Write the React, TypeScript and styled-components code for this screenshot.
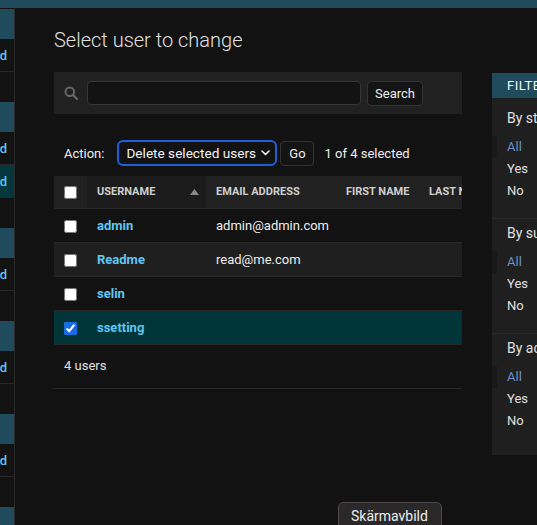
import React from "react";
import styled, { createGlobalStyle } from "styled-components";

const Global = createGlobalStyle`
  html, body { margin: 0; padding: 0; background: #121212; overflow: hidden; }
  body { font-family: Roboto, "Liberation Sans", Arial, sans-serif; color: #eeeeee; font-size: 13px; }
  * { box-sizing: border-box; }
`;

const TEAL = "#1f4b5d";
const LINK = "#62c6f2";
const HAIR = "#272727";

const Page = styled.div`
  position: relative;
  width: 537px;
  height: 525px;
  overflow: hidden;
  display: flex;
  flex-direction: column;
`;

const TopBar = styled.div`
  height: 8px;
  flex-shrink: 0;
  background: ${TEAL};
`;

const Body = styled.div`
  display: flex;
  flex: 1;
  min-height: 0;
`;

const Sidebar = styled.nav`
  width: 15px;
  flex-shrink: 0;
  border-right: 1px solid #2b2b2b;
  overflow: hidden;
  padding-top: 1px;
`;

const SidebarInner = styled.div`
  width: 240px;
  margin-left: -226px;
`;

const Module = styled.div`
  margin-bottom: 30px;
`;

const Caption = styled.div`
  height: 30px;
  background: ${TEAL};
  color: #f7f7f7;
  font-size: 11px;
  line-height: 30px;
  padding: 0 40px 0 10px;
  white-space: nowrap;
  overflow: hidden;
`;

const NavRow = styled.div<{ $current?: boolean }>`
  height: 33px;
  border-bottom: 1px solid ${HAIR};
  background: ${(p) => (p.$current ? "#04383c" : "transparent")};
  display: flex;
  align-items: center;
  justify-content: space-between;
  padding: 0 7px 0 10px;
`;

const NavLink = styled.span`
  color: ${LINK};
  font-size: 13px;
  font-weight: 500;
  white-space: nowrap;
`;

const Content = styled.main`
  flex: 1;
  min-width: 0;
  padding: 20px 0 0 39px;
`;

const Title = styled.h1`
  margin: 0 0 20px;
  font-size: 20px;
  line-height: 24px;
  font-weight: 300;
  color: #e0e0e0;
`;

const Changelist = styled.div`
  display: flex;
  align-items: flex-start;
  gap: 30px;
`;

const Main = styled.div`
  width: 408px;
  flex-shrink: 0;
`;

const Toolbar = styled.form`
  height: 42px;
  background: #212121;
  padding: 0 10px;
  display: flex;
  align-items: center;
`;

const SearchIcon = styled.svg`
  width: 14px;
  height: 14px;
  margin-right: 9px;
  flex-shrink: 0;
`;

const SearchInput = styled.input`
  width: 274px;
  height: 24px;
  border: 1px solid #363636;
  border-radius: 4px;
  background: #121212;
  color: #eee;
  margin: 0 6px 0 0;
  padding: 0 6px;
  outline: none;
`;

const Button = styled.button<{ $w: number }>`
  width: ${(p) => p.$w}px;
  height: 25px;
  border: 1px solid #333333;
  border-radius: 4px;
  background: #141414;
  color: #eeeeee;
  font-family: inherit;
  font-size: 13px;
  padding: 0;
  cursor: pointer;
`;

const Actions = styled.div`
  padding: 26px 10px 10px;
  display: flex;
  align-items: center;
`;

const ActionLabel = styled.label`
  font-size: 13px;
  color: #eeeeee;
  margin-right: 13px;
`;

const SelectBox = styled.div`
  width: 160px;
  height: 26px;
  border: 2px solid #1c5fda;
  border-radius: 6px;
  background: #121212;
  display: flex;
  align-items: center;
  justify-content: space-between;
  padding: 0 5px 0 7px;
  font-size: 13.6px;
  color: #f2f2f2;
  white-space: nowrap;
  margin-right: 3px;
`;

const Counter = styled.span`
  margin-left: 10px;
  font-size: 13px;
  color: #eeeeee;
`;

const TableWrap = styled.div`
  width: 408px;
  overflow: hidden;
`;

const Table = styled.table`
  border-collapse: collapse;
  table-layout: fixed;
  width: 585px;
`;

const Th = styled.th<{ $sorted?: boolean }>`
  height: 32px;
  padding: 0 10px;
  background: ${(p) => (p.$sorted ? "#1b1b1b" : "#212121")};
  text-align: left;
  font-size: 11px;
  font-weight: 700;
  text-transform: uppercase;
  color: #cfcfcf;
  white-space: nowrap;
  overflow: hidden;
`;

const SortHead = styled.div`
  display: flex;
  align-items: center;
  justify-content: space-between;
  margin-right: -3px;
`;

const Tr = styled.tr<{ $bg: string }>`
  background: ${(p) => p.$bg};
`;

const Td = styled.td`
  height: 34px;
  padding: 0 10px;
  border-top: 1px solid ${HAIR};
  font-size: 13px;
  color: #eeeeee;
  white-space: nowrap;
  overflow: hidden;
`;

const UserLink = styled.a`
  color: ${LINK};
  font-weight: 700;
  text-decoration: none;
`;

const Check = styled.input`
  margin: 0;
  width: 13px;
  height: 13px;
  vertical-align: middle;
  accent-color: #1a6ae6;
`;

const Paginator = styled.p`
  margin: 0;
  border-top: 1px solid ${HAIR};
  border-bottom: 1px solid #2a2a2a;
  padding: 10px 10px 11px;
  line-height: 22px;
  font-size: 13px;
  color: #e0e0e0;
`;

const Filter = styled.aside`
  width: 240px;
  flex-shrink: 0;
  margin-top: 1px;
  background: #1f1f1f;
  padding-bottom: 7px;
`;

const FilterTitle = styled.h2`
  margin: 0 0 6px;
  height: 25px;
  line-height: 25px;
  padding: 0 15px;
  background: ${TEAL};
  font-size: 13px;
  font-weight: 400;
  letter-spacing: 0.5px;
  text-transform: uppercase;
  color: #f7f7f7;
`;

const FilterSection = styled.div`
  padding-top: 6px;
`;

const FilterHeading = styled.h3`
  margin: 0;
  padding: 0 15px;
  font-size: 14px;
  line-height: 17px;
  font-weight: 400;
  color: #e0e0e0;
  white-space: nowrap;
`;

const FilterList = styled.ul<{ $last?: boolean }>`
  list-style: none;
  margin: 9px 0 0;
  padding: 0 15px 16px;
  border-bottom: ${(p) => (p.$last ? "none" : `1px solid ${HAIR}`)};
`;

const FilterItem = styled.li<{ $selected?: boolean }>`
  line-height: 22px;
  font-size: 13px;
  color: ${(p) => (p.$selected ? "#6a90c8" : "#e0e0e0")};
  ${(p) =>
    p.$selected
      ? `border-left: 5px solid #191919; margin-left: -15px; padding-left: 10px;`
      : ""}
`;

const ScreenshotLabel = styled.div`
  position: absolute;
  left: 338px;
  top: 502px;
  width: 104px;
  height: 30px;
  background: #2a2829;
  border: 1px solid #4a4849;
  border-radius: 5px;
  padding-left: 12px;
  line-height: 26px;
  font-size: 14px;
  color: #eeeeee;
`;

const modules = [
  { caption: "Auth", rows: [{ name: "Groups" }] },
  { caption: "Users", rows: [{ name: "Readmes" }, { name: "Users", current: true }] },
  { caption: "Sites", rows: [{ name: "Sites" }] },
  { caption: "Tokens", rows: [{ name: "Tokens" }] },
  { caption: "Social", rows: [{ name: "Accounts" }] },
  { caption: "Other", rows: [] as { name: string; current?: boolean }[] },
];

const users = [
  { name: "admin", email: "admin@admin.com", checked: false },
  { name: "Readme", email: "read@me.com", checked: false },
  { name: "selin", email: "", checked: false },
  { name: "ssetting", email: "", checked: true },
];

const filters = ["By staff status", "By superuser status", "By active"];

export default function App() {
  return (
    <>
      <Global />
      <Page>
        <TopBar />
        <Body>
          <Sidebar>
            <SidebarInner>
              {modules.map((m) => (
                <Module key={m.caption}>
                  <Caption>{m.caption}</Caption>
                  {m.rows.map((r) => (
                    <NavRow key={r.name} $current={r.current}>
                      <NavLink>{r.name}</NavLink>
                      <NavLink>Add</NavLink>
                    </NavRow>
                  ))}
                </Module>
              ))}
            </SidebarInner>
          </Sidebar>
          <Content>
            <Title>Select user to change</Title>
            <Changelist>
              <Main>
                <Toolbar onSubmit={(e) => e.preventDefault()}>
                  <SearchIcon viewBox="0 0 14 14">
                    <circle cx="5.8" cy="5.8" r="4.3" fill="none" stroke="#666" strokeWidth="2" />
                    <line x1="9" y1="9" x2="13" y2="13" stroke="#666" strokeWidth="2.2" strokeLinecap="round" />
                  </SearchIcon>
                  <SearchInput type="text" />
                  <Button $w={56} type="submit">Search</Button>
                </Toolbar>
                <Actions>
                  <ActionLabel>Action:</ActionLabel>
                  <SelectBox>
                    <span>Delete selected users</span>
                    <svg width="9" height="6" viewBox="0 0 9 6">
                      <polyline points="1,1 4.5,4.5 8,1" fill="none" stroke="#f2f2f2" strokeWidth="1.6" strokeLinecap="round" strokeLinejoin="round" />
                    </svg>
                  </SelectBox>
                  <Button $w={34} type="button">Go</Button>
                  <Counter>1 of 4 selected</Counter>
                </Actions>
                <TableWrap>
                  <Table>
                    <colgroup>
                      <col style={{ width: 33 }} />
                      <col style={{ width: 119 }} />
                      <col style={{ width: 130 }} />
                      <col style={{ width: 83 }} />
                      <col style={{ width: 110 }} />
                      <col style={{ width: 110 }} />
                    </colgroup>
                    <thead>
                      <tr>
                        <Th>
                          <Check type="checkbox" readOnly />
                        </Th>
                        <Th $sorted>
                          <SortHead>
                            <span>Username</span>
                            <svg width="9" height="6" viewBox="0 0 9 6">
                              <polygon points="0,6 4.5,0 9,6" fill="#888" />
                            </svg>
                          </SortHead>
                        </Th>
                        <Th>Email address</Th>
                        <Th>First name</Th>
                        <Th>Last name</Th>
                        <Th>Staff status</Th>
                      </tr>
                    </thead>
                    <tbody>
                      {users.map((u, i) => (
                        <Tr
                          key={u.name}
                          $bg={u.checked ? "#00363a" : i % 2 === 1 ? "#1f1f1f" : "transparent"}
                        >
                          <Td>
                            <Check type="checkbox" checked={u.checked} readOnly />
                          </Td>
                          <Td>
                            <UserLink href="#">{u.name}</UserLink>
                          </Td>
                          <Td>{u.email}</Td>
                          <Td />
                          <Td />
                          <Td />
                        </Tr>
                      ))}
                    </tbody>
                  </Table>
                </TableWrap>
                <Paginator>4 users</Paginator>
              </Main>
              <Filter>
                <FilterTitle>Filter</FilterTitle>
                {filters.map((f, i) => (
                  <FilterSection key={f}>
                    <FilterHeading>{f}</FilterHeading>
                    <FilterList $last={i === filters.length - 1}>
                      <FilterItem $selected>All</FilterItem>
                      <FilterItem>Yes</FilterItem>
                      <FilterItem>No</FilterItem>
                    </FilterList>
                  </FilterSection>
                ))}
              </Filter>
            </Changelist>
          </Content>
        </Body>
        <ScreenshotLabel>Skärmavbild</ScreenshotLabel>
      </Page>
    </>
  );
}
